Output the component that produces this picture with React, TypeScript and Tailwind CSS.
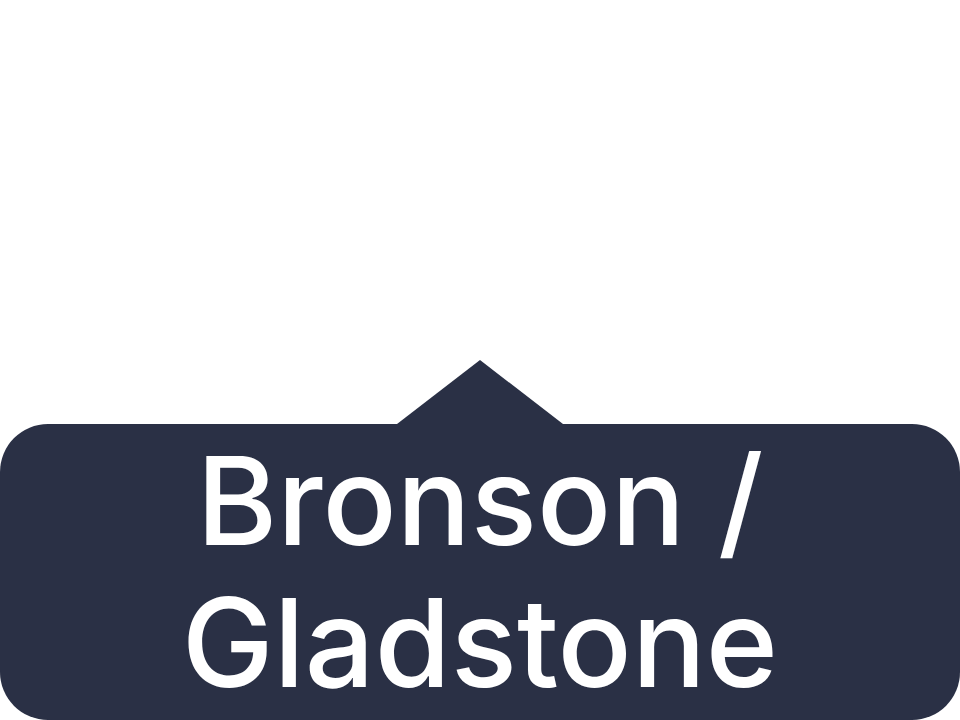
export default function App() {
  return (
    <div className="flex h-[720px] w-[960px] flex-col items-center justify-end overflow-hidden bg-white">
      {/* pointer */}
      <div className="h-0 w-0 border-b-[64px] border-l-[83px] border-r-[83px] border-b-[#2a3045] border-l-transparent border-r-transparent" />
      <div className="w-full rounded-[48px] bg-[#2a3045] py-[6px] text-center text-[123px] leading-[142px] font-medium text-white [font-family:Inter,'Noto_Sans',sans-serif]">
        Bronson / Gladstone
      </div>
    </div>
  )
}
